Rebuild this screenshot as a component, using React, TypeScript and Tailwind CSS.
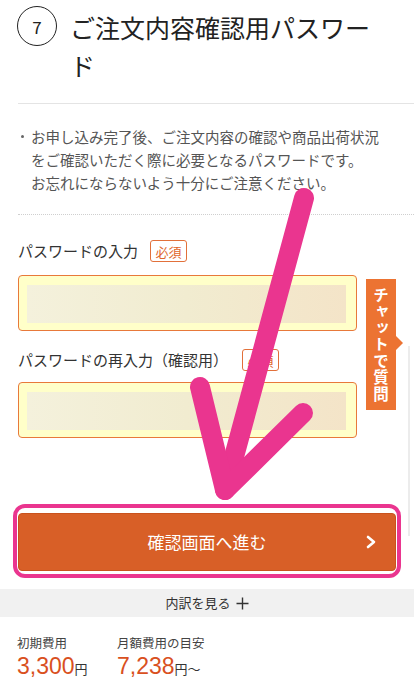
import React from "react";

const JP = { fontFamily: '"Noto Sans CJK JP", "Noto Sans", sans-serif' };
const NUM = { fontFamily: '"Liberation Sans", Arial, sans-serif' };

function Badge() {
  return (
    <span className="inline-flex h-[22px] w-[37px] items-center justify-center rounded-[3px] border border-[#e2703a] text-[13px] leading-none text-[#e0652a]">
      必須
    </span>
  );
}

function Field() {
  return (
    <div className="ml-[18px] h-[56px] w-[339px] rounded-[4px] border-[1.5px] border-[#e8793a] bg-[#ffffc9] pb-[7px] pl-[8px] pr-[10px] pt-[9px]">
      <div className="h-full w-full bg-gradient-to-r from-[#f4f1dc] via-[#f1ecd0] to-[#f4e4c8]" />
    </div>
  );
}

export default function App() {
  return (
    <div className="relative h-[690px] w-[414px] overflow-hidden bg-white text-[#333]" style={JP}>
      {/* Header */}
      <div className="flex items-start pt-[6px]">
        <div className="ml-[17px] flex h-[40px] w-[40px] shrink-0 items-center justify-center rounded-full border border-[#222] text-[17px] leading-none text-[#222]">
          7
        </div>
        <div className="ml-[13px] mt-[2px] w-[315px] text-[25px] leading-[38px] text-[#222]">
          ご注文内容確認用パスワード
        </div>
      </div>
      <div className="ml-[18px] mt-[19px] border-b border-[#e4e4e4]" />

      {/* Note */}
      <div className="mt-[21px] flex pl-[21px] text-[14.5px] leading-[23px] text-[#555]">
        <div className="flex h-[23px] w-[10px] shrink-0 items-center">
          <div className="h-[2.5px] w-[2.5px] rounded-full bg-[#666]" />
        </div>
        <p className="w-[362px]">
          お申し込み完了後、ご注文内容の確認や商品出荷状況をご確認いただく際に必要となるパスワードです。
          <br />
          お忘れにならないよう十分にご注意ください。
        </p>
      </div>
      <div className="ml-[18px] mt-[20px] border-b border-dotted border-[#cfcfcf]" />

      {/* Field 1 */}
      <div className="ml-[18px] mt-[25px] flex h-[22px] items-center gap-[12px]">
        <span className="text-[15px] text-[#333]">パスワードの入力</span>
        <Badge />
      </div>
      <div className="mt-[13px]">
        <Field />
      </div>

      {/* Field 2 */}
      <div className="ml-[18px] mt-[18px] flex h-[22px] items-center gap-[14px]">
        <span className="text-[15px] text-[#333]">パスワードの再入力（確認用）</span>
        <Badge />
      </div>
      <div className="mt-[11px]">
        <Field />
      </div>

      {/* Button */}
      <div className="ml-[13px] mt-[66px] w-[388px] rounded-[12px] border-[4px] border-[#ea358f] px-[1px] pb-[3px] pt-[5px]">
        <button className="relative flex h-[58px] w-full items-center justify-center rounded-[4px] border border-[#c9521d] bg-[#d85f27] text-[17px] text-white">
          確認画面へ進む
          <svg className="absolute right-[18px] top-1/2 -translate-y-1/2" width="12" height="14" viewBox="0 0 12 14">
            <polyline points="3,2 9,7 3,12" fill="none" stroke="#fff" strokeWidth="2.6" strokeLinecap="round" strokeLinejoin="round" />
          </svg>
        </button>
      </div>

      {/* Gray bar */}
      <div className="mt-[11px] flex h-[28px] items-center justify-center gap-[5px] bg-[#f1f1f1] text-[13px] text-[#333]">
        <span>内訳を見る</span>
        <svg width="13" height="13" viewBox="0 0 13 13">
          <path d="M6.5 0.5v12M0.5 6.5h12" stroke="#333" strokeWidth="1.4" />
        </svg>
      </div>

      {/* Prices */}
      <div className="mt-[17px] flex pl-[17px]">
        <div className="w-[100px]">
          <div className="text-[12.5px] leading-[18px] text-[#444]">初期費用</div>
          <div className="flex items-baseline">
            <span className="text-[23px] leading-[28px] text-[#d9501e]" style={NUM}>
              3,300
            </span>
            <span className="text-[13px] text-[#333]">円</span>
          </div>
        </div>
        <div>
          <div className="text-[12.5px] leading-[18px] text-[#444]">月額費用の目安</div>
          <div className="flex items-baseline">
            <span className="text-[23px] leading-[28px] text-[#d9501e]" style={NUM}>
              7,238
            </span>
            <span className="text-[13px] text-[#333]">円～</span>
          </div>
        </div>
      </div>

      {/* Chat tab */}
      <div className="absolute left-[366px] top-[279px] flex h-[131px] w-[30px] items-center justify-center bg-[#ec7332]">
        <span className="text-[15.5px] font-bold leading-[30px] tracking-[1px] text-white [writing-mode:vertical-rl]">
          チャットで質問
        </span>
        <div className="absolute left-[30px] top-[57px] h-0 w-0 border-b-[7px] border-l-[7px] border-t-[7px] border-b-transparent border-l-[#ec7332] border-t-transparent" />
      </div>
      <div className="absolute left-[408px] top-[346px] h-[190px] w-[2px] bg-[#ececec]" />

      {/* Pink arrow overlay */}
      <svg className="pointer-events-none absolute left-0 top-0" width="414" height="690" viewBox="0 0 414 690">
        <g fill="none" stroke="#ea358f" strokeWidth="20" strokeLinecap="round" strokeLinejoin="round">
          <line x1="304" y1="198" x2="225" y2="490" />
          <polyline points="200,387 225,490 303,413" />
        </g>
      </svg>
    </div>
  );
}
